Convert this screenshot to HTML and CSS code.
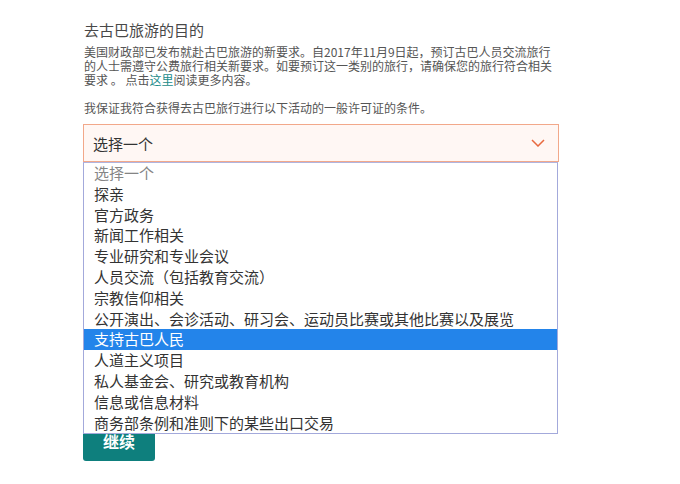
FILE: index.html
```html
<!DOCTYPE html>
<html lang="zh-CN">
<head>
    <meta charset="UTF-8">
    <meta name="viewport" content="width=device-width, initial-scale=1.0">
    <title>去古巴旅游的目的</title>
    <link rel="stylesheet" href="styles.css">
</head>
<body>
    <div class="purpose">
        <h2>去古巴旅游的目的</h2>
        <p class="note">美国财政部已发布就赴古巴旅游的新要求。自2017年11月9日起，预订古巴人员交流旅行的人士需遵守公费旅行相关新要求。如要预订这一类别的旅行，请确保您的旅行符合相关要求 。 点击<a href="#">这里</a>阅读更多内容。</p>
        <p class="pledge">我保证我符合获得去古巴旅行进行以下活动的一般许可证的条件。</p>

        <div class="select-wrap">
            <div class="select">
                <span>选择一个</span>
                <svg class="chevron" width="14" height="8" viewBox="0 0 14 8"><path d="M1 1 L7 7 L13 1" fill="none" stroke="#e8693f" stroke-width="1.5"/></svg>
            </div>
            <ul class="options">
                <li class="placeholder">选择一个</li>
                <li>探亲</li>
                <li>官方政务</li>
                <li>新闻工作相关</li>
                <li>专业研究和专业会议</li>
                <li>人员交流（包括教育交流）</li>
                <li>宗教信仰相关</li>
                <li>公开演出、会诊活动、研习会、运动员比赛或其他比赛以及展览</li>
                <li class="selected">支持古巴人民</li>
                <li>人道主义项目</li>
                <li>私人基金会、研究或教育机构</li>
                <li>信息或信息材料</li>
                <li>商务部条例和准则下的某些出口交易</li>
            </ul>
        </div>

        <button class="continue">继续</button>
    </div>
</body>
</html>
```

FILE: styles.css
```css
* {
    margin: 0;
    padding: 0;
    box-sizing: border-box;
}
body {
    background-color: #fff;
    font-family: "Noto Sans CJK SC", "Liberation Sans", sans-serif;
    color: #444;
}
.purpose {
    width: 476px;
    margin-left: 83px;
    padding-top: 20px;
}
.purpose h2 {
    font-size: 15px;
    font-weight: normal;
    line-height: 20px;
    color: #484848;
    padding-left: 1px;
}
.note,
.pledge {
    font-size: 12px;
    line-height: 14px;
    color: #555;
    padding-left: 1px;
}
.note {
    margin-top: 5px;
    width: 476px;
}
.note a {
    color: #1b8c8a;
    text-decoration: none;
}
.pledge {
    margin-top: 14px;
}

.select-wrap {
    position: relative;
    margin-top: 9px;
}
.select {
    display: flex;
    align-items: center;
    justify-content: space-between;
    height: 38px;
    padding: 0 13px 0 9px;
    border: 1px solid #f2a88a;
    background-color: #fff7f4;
    font-size: 15px;
    color: #333;
}
.options {
    position: absolute;
    top: 100%;
    left: 0;
    width: 475px;
    list-style: none;
    background-color: #fff;
    border: 1px solid #a3a9db;
    border-top-color: #b0b4e0;
    z-index: 2;
}
.options li {
    font-size: 15px;
    line-height: 20.8px;
    height: 20.8px;
    padding-left: 10px;
    color: #333;
    white-space: nowrap;
}
.options li.placeholder {
    color: #858585;
}
.options li.selected {
    background-color: #2384ea;
    color: #fff;
}

.continue {
    display: block;
    margin-top: 259px;
    width: 72px;
    height: 40px;
    border: none;
    border-radius: 3px;
    background-color: #0e7f7d;
    color: #fff;
    font-family: "Noto Sans CJK SC", sans-serif;
    font-size: 16px;
    font-weight: bold;
}
```
